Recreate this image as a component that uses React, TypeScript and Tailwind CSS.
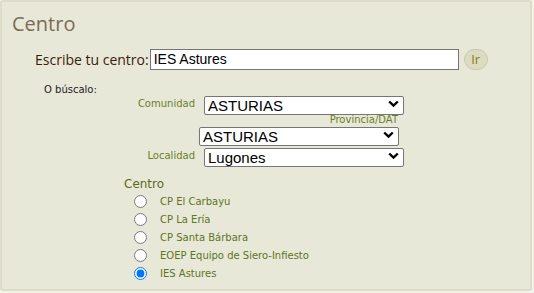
import React from "react";

const centros = [
  "CP El Carbayu",
  "CP La Ería",
  "CP Santa Bárbara",
  "EOEP Equipo de Siero-Infiesto",
  "IES Astures",
];

function Chevron() {
  return (
    <svg width="11" height="8" viewBox="0 0 11 8" className="pointer-events-none absolute right-[5px] top-1/2 -translate-y-1/2">
      <path d="M1.2 1.5 L5.5 5.6 L9.8 1.5" fill="none" stroke="#000" strokeWidth="2.4" />
    </svg>
  );
}

function Select({ value, className }: { value: string; className?: string }) {
  return (
    <div className={"relative h-[19px] w-[200px] " + (className ?? "")}>
      <select
        defaultValue={value}
        className="h-full w-full appearance-none rounded-[2px] border border-[#767676] bg-white pl-[3px] text-[15px] leading-[17px] text-black outline-none font-['Liberation_Sans',Arial,sans-serif]"
      >
        <option>{value}</option>
      </select>
      <Chevron />
    </div>
  );
}

export default function App() {
  return (
    <div className="h-[293px] w-[534px] bg-[#f2f2ea] font-['DejaVu_Sans',Verdana,sans-serif]">
      <div className="h-[291px] w-[532px] rounded-[3px] border-2 border-[#dcdcc8] bg-[#e8e8d9] pl-[10px] pt-[9px]">
        <h1 className="text-[20px] leading-[26px] text-[#7b6b55] font-['Open_Sans',sans-serif]">Centro</h1>

        <div className="mt-[12px] flex items-center pl-[23px]">
          <span className="text-[14px] text-[#3b1d08] font-['Open_Sans',sans-serif]">Escribe tu centro:</span>
          <input
            defaultValue="IES Astures"
            className="ml-[1px] h-[21px] w-[309px] border border-[#767676] bg-white px-[3px] text-[14px] text-black outline-none font-['Liberation_Sans',Arial,sans-serif]"
          />
          <button className="ml-[5px] flex h-[21px] w-[24px] items-center justify-center rounded-full border border-[#c9c9a6] bg-[#dcdcc2] text-[13px] text-[#8a7a12] font-['Open_Sans',sans-serif]">
            Ir
          </button>
        </div>

        <p className="mt-[13px] pl-[32px] text-[10px] leading-[13px] text-[#222]">O búscalo:</p>

        <div className="-mt-[2px] flex items-center">
          <span className="w-[183px] text-right text-[10px] text-[#6b7f1f]">Comunidad</span>
          <Select value="ASTURIAS" className="ml-[9px]" />
        </div>
        <div className="relative z-10 mt-[2px] w-[386px] text-right text-[10px] leading-[10px] text-[#6b7f1f]">Provincia/DAT</div>
        <Select value="ASTURIAS" className="ml-[187px]" />
        <div className="mt-[2px] flex items-center">
          <span className="w-[183px] text-right text-[10px] text-[#6b7f1f]">Localidad</span>
          <Select value="Lugones" className="ml-[9px]" />
        </div>

        <div className="mt-[11px] pl-[112px]">
          <p className="text-[12px] leading-[16px] text-[#5b6b19]">Centro</p>
          <ul>
            {centros.map((c) => (
              <li key={c} className="flex h-[18px] items-center">
                <input
                  type="radio"
                  name="centro"
                  defaultChecked={c === "IES Astures"}
                  className="m-0 ml-[10px] h-[13px] w-[13px]"
                />
                <span className="ml-[13px] text-[10px] text-[#5f741c]">{c}</span>
              </li>
            ))}
          </ul>
        </div>
      </div>
    </div>
  );
}
